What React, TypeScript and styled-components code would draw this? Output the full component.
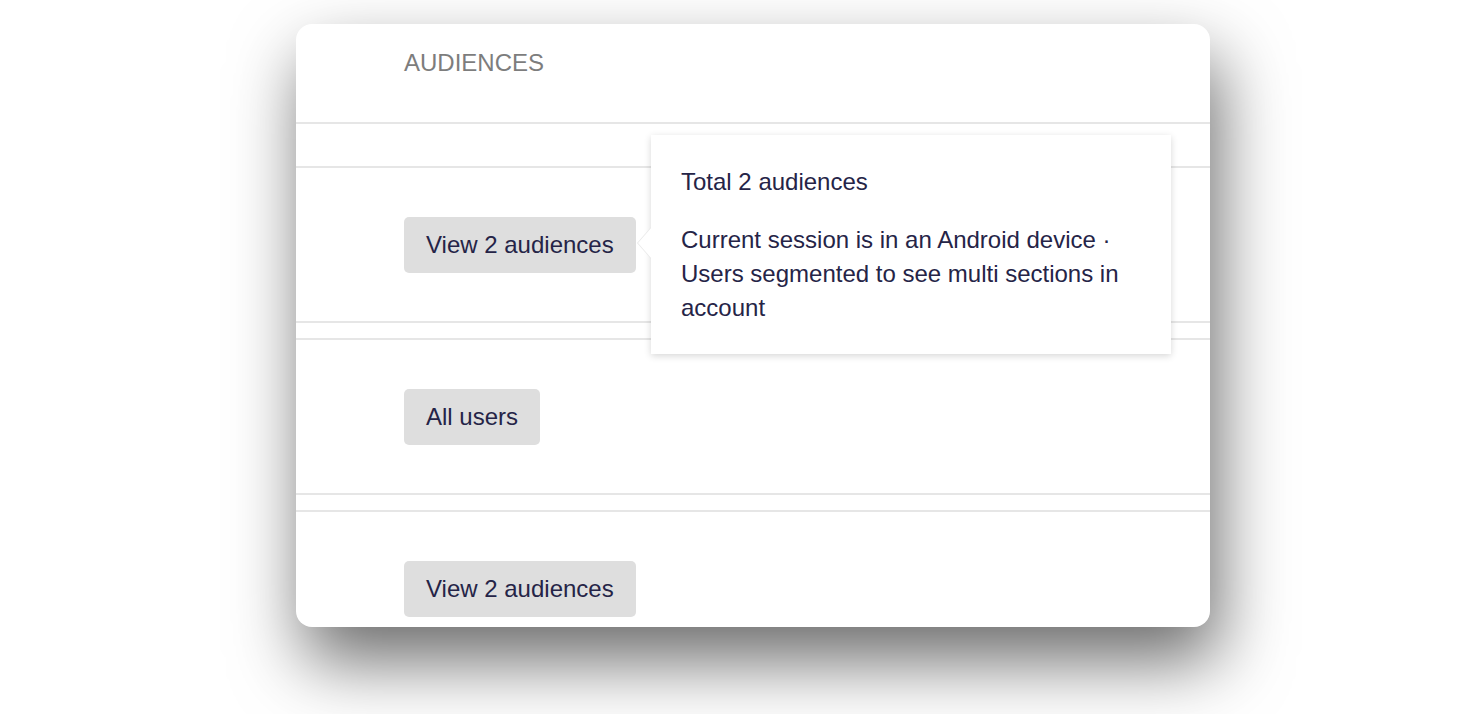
import styled, { createGlobalStyle } from "styled-components";

const GlobalStyle = createGlobalStyle`
    html, body {
        margin: 0;
        padding: 0;
        background: #ffffff;
        font-family: "Liberation Sans", Arial, sans-serif;
    }
`;

type Row = {
    label: string;
};

const rows: Row[] = [
    { label: "View 2 audiences" },
    { label: "All users" },
    { label: "View 2 audiences" },
];

const App = () => {
    return (
        <>
            <GlobalStyle />
            <Page>
                <Card>
                    <Header>AUDIENCES</Header>
                    <Spacer />
                    <Rows>
                        {rows.map((row, index) => (
                            <AudienceRow key={index}>
                                <AudienceButton>{row.label}</AudienceButton>
                            </AudienceRow>
                        ))}
                    </Rows>
                    <Tooltip>
                        <TooltipTitle>Total 2 audiences</TooltipTitle>
                        <TooltipBody>
                            Current session is in an Android device · Users segmented to see multi sections in account
                        </TooltipBody>
                    </Tooltip>
                </Card>
            </Page>
        </>
    );
};

const Page = styled.div`
    width: 1462px;
    height: 714px;
    padding: 24px 0 0 296px;
    box-sizing: border-box;
    overflow: hidden;
`;

const Card = styled.div`
    position: relative;
    width: 914px;
    height: 603px;
    overflow: hidden;
    background: #ffffff;
    border-radius: 16px;
    box-shadow: 8px 34px 70px rgba(0, 0, 0, 0.58);
`;

const Header = styled.div`
    height: 73px;
    padding: 25px 0 0 108px;
    border-bottom: 2px solid #e6e6e6;
    color: #7d7d7d;
    font-size: 24px;
    line-height: 28px;
`;

const Spacer = styled.div`
    height: 42px;
`;

const Rows = styled.div`
    display: flex;
    flex-direction: column;
    gap: 15px;
`;

const AudienceRow = styled.div`
    flex-shrink: 0;
    height: 153px;
    display: flex;
    align-items: center;
    padding-left: 108px;
    border-top: 2px solid #e6e6e6;
    border-bottom: 2px solid #e6e6e6;
`;

const AudienceButton = styled.div`
    height: 56px;
    padding: 0 22px;
    display: flex;
    align-items: center;
    background: #dedede;
    border-radius: 5px;
    color: #252447;
    font-size: 24px;
`;

const Tooltip = styled.div`
    position: absolute;
    left: 355px;
    top: 111px;
    width: 520px;
    box-sizing: border-box;
    padding: 30px 30px 29px;
    background: #ffffff;
    box-shadow: 0 2px 7px rgba(0, 0, 0, 0.16);
    color: #252447;
    font-size: 24px;
    line-height: 34px;

    &::before {
        content: "";
        position: absolute;
        left: -14px;
        top: 92px;
        border-top: 16px solid transparent;
        border-bottom: 16px solid transparent;
        border-right: 14px solid #e9e9e9;
    }

    &::after {
        content: "";
        position: absolute;
        left: -13px;
        top: 92px;
        border-top: 16px solid transparent;
        border-bottom: 16px solid transparent;
        border-right: 14px solid #ffffff;
    }
`;

const TooltipTitle = styled.div`
    margin-bottom: 24px;
`;

const TooltipBody = styled.div``;

export default App;
